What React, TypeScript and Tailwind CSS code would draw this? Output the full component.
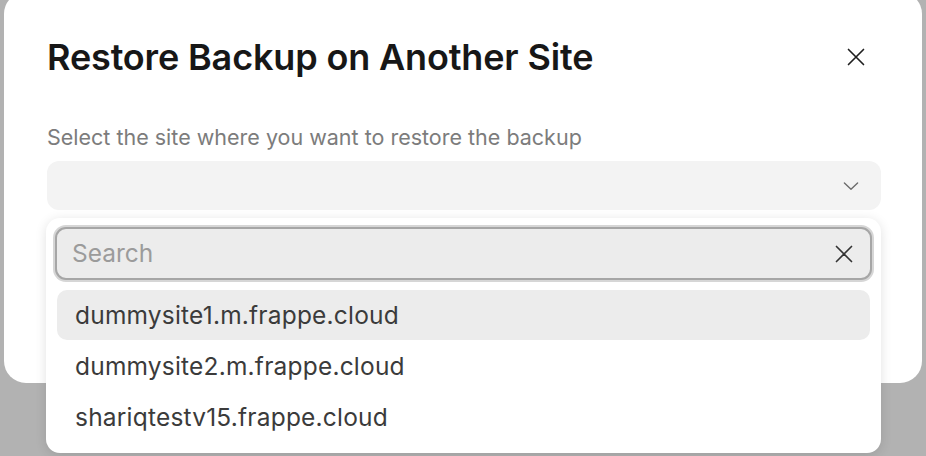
import React from 'react'

const sites = [
  'dummysite1.m.frappe.cloud',
  'dummysite2.m.frappe.cloud',
  'shariqtestv15.frappe.cloud',
]

function XIcon({ className }: { className?: string }) {
  return (
    <svg viewBox="0 0 16 16" fill="none" className={className}>
      <path d="M3 3l10 10M13 3L3 13" stroke="currentColor" strokeWidth="1.1" strokeLinecap="round" />
    </svg>
  )
}

export default function App() {
  const [active] = React.useState(0)

  return (
    <div
      className="relative h-[456px] w-[926px] overflow-hidden bg-[#b2b2b2]"
      style={{ fontFamily: 'Inter, "Noto Sans", sans-serif' }}
    >
      {/* dialog */}
      <div className="ml-[4px] mt-[-8px] h-[391px] w-[918px] rounded-[22px] bg-white pl-[43px] pr-[41px] pt-[43px]">
        <div className="flex items-center justify-between">
          <h2 className="text-[36px] font-semibold leading-[44px] tracking-[-0.15px] text-[#171717]">
            Restore Backup on Another Site
          </h2>
          <button className="mr-[9px] flex h-[32px] w-[32px] items-center justify-center text-[#1f1f1f]">
            <XIcon className="h-[24px] w-[24px]" />
          </button>
        </div>

        <div className="mt-[44px]">
          <label className="block text-[21.5px] leading-[28px] text-[#7c7c7c]">
            Select the site where you want to restore the backup
          </label>
          <div className="mt-[10px] flex h-[49px] items-center justify-end rounded-[12px] bg-[#f3f3f3] pr-[19px]">
            <svg viewBox="0 0 16 16" fill="none" className="h-[22px] w-[22px] text-[#6b6b6b]">
              <path d="M3.2 5.8l4.8 4.6 4.8-4.6" stroke="currentColor" strokeWidth="1" strokeLinecap="round" strokeLinejoin="round" />
            </svg>
          </div>
        </div>
      </div>

      {/* dropdown popover */}
      <div className="absolute left-[46px] top-[218px] w-[835px] rounded-[14px] bg-white px-[9px] pb-[11px] pt-[9px] shadow-[0_2px_12px_rgba(0,0,0,0.12)]">
        <div className="flex h-[53px] items-center rounded-[11px] border-2 border-[#a6a6a6] bg-[#ececec] pl-[15px] pr-[14px] shadow-[0_0_0_2px_#d6d6d6]">
          <input
            placeholder="Search"
            className="min-w-0 flex-1 bg-transparent text-[24.5px] text-[#333] placeholder:text-[#9b9b9b] outline-none"
          />
          <XIcon className="h-[24px] w-[24px] text-[#333]" />
        </div>
        <ul className="mx-[2px] mt-[10px] space-y-[1px]">
          {sites.map((s, i) => (
            <li
              key={s}
              className={`flex h-[50px] items-center rounded-[10px] px-[18px] text-[24.5px] tracking-[0.2px] text-[#3b3b3b] ${i === active ? 'bg-[#ececec]' : ''}`}
            >
              {s}
            </li>
          ))}
        </ul>
      </div>
    </div>
  )
}
